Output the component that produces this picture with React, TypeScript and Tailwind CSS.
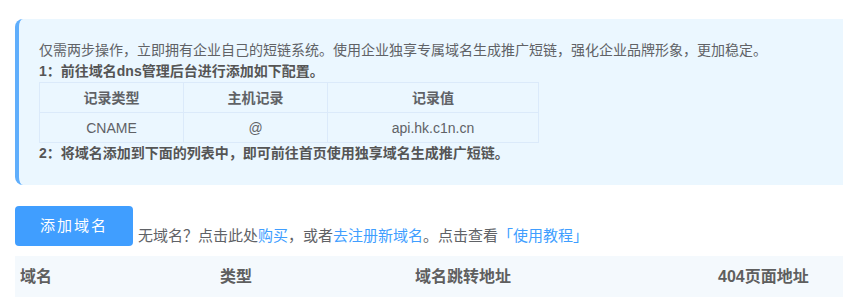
const font = "font-['Liberation_Sans','Noto_Sans_CJK_SC',sans-serif]";

const records = [{ type: "CNAME", host: "@", value: "api.hk.c1n.cn" }];

const DnsTable = () => {
  return (
    <table className="border-collapse text-sm text-center">
      <thead>
        <tr className="h-[30px]">
          <th className="w-[144px] border border-[#dbeafa] font-bold">记录类型</th>
          <th className="w-[144px] border border-[#dbeafa] font-bold">主机记录</th>
          <th className="w-[211px] border border-[#dbeafa] font-bold">记录值</th>
        </tr>
      </thead>
      <tbody>
        {records.map((r) => (
          <tr key={r.value} className="h-[30px]">
            <td className="border border-[#dbeafa]">{r.type}</td>
            <td className="border border-[#dbeafa]">{r.host}</td>
            <td className="border border-[#dbeafa]">{r.value}</td>
          </tr>
        ))}
      </tbody>
    </table>
  );
};

const App = () => {
  return (
    <div className={`${font} bg-white min-h-[300px] pl-[15px] pt-[19px] text-[#606266]`}>
      {/* Tip panel */}
      <div className="bg-[#ebf7ff] border-l-4 border-[#5faefc] rounded-l-lg pl-5 pt-[21px] pb-[21px] text-sm leading-[21px]">
        <p>
          仅需两步操作，立即拥有企业自己的短链系统。使用企业独享专属域名生成推广短链，强化企业品牌形象，更加稳定。
        </p>
        <p className="font-bold text-[#555]">1：前往域名dns管理后台进行添加如下配置。</p>
        <DnsTable />
        <p className="font-bold text-[#555]">2：将域名添加到下面的列表中，即可前往首页使用独享域名生成推广短链。</p>
      </div>

      {/* Actions */}
      <div className="flex items-end mt-[21px]">
        <button className="w-[118px] h-10 rounded bg-[#409eff] text-white text-[15px] tracking-[2px]">
          添加域名
        </button>
        <p className="ml-[5px] text-[15px] leading-[21px]">
          无域名？点击此处<a className="text-[#409eff]">购买</a>，或者
          <a className="text-[#409eff]">去注册新域名</a>。点击查看
          <a className="text-[#409eff]">「使用教程」</a>
        </p>
      </div>

      {/* List header */}
      <div className="mt-[10px] h-[41px] bg-[#f4f9fd] grid grid-cols-[200px_195px_303px_1fr] items-center text-base font-bold text-[#5f5f5f]">
        <div className="pl-[5px]">域名</div>
        <div className="pl-[5px]">类型</div>
        <div className="pl-[5px]">域名跳转地址</div>
        <div className="pl-[5px]">404页面地址</div>
      </div>
    </div>
  );
};

export default App;
